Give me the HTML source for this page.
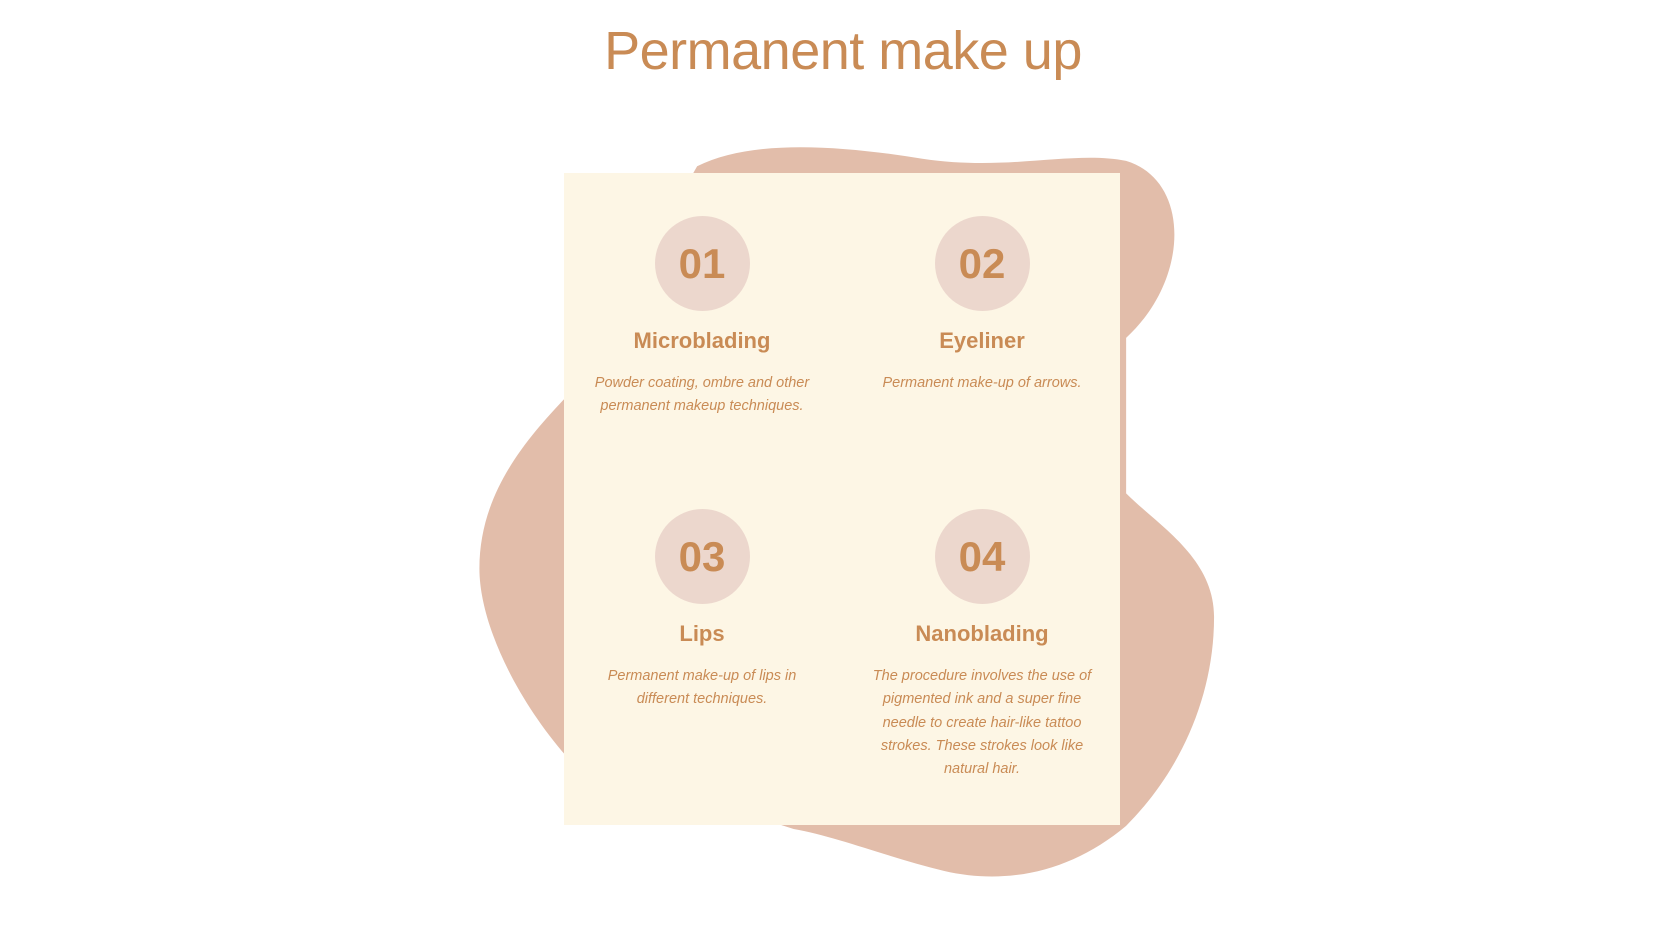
<!DOCTYPE html>
<html><head><meta charset="utf-8"><style>
html,body{margin:0;padding:0;background:#fff;width:1673px;height:941px;overflow:hidden;font-family:"Liberation Sans",sans-serif;color:#c98b55}
h1{position:absolute;left:0;width:1686px;top:20px;margin:0;text-align:center;font-weight:400;font-size:54px;letter-spacing:-0.5px}
svg{position:absolute;left:0;top:0}
.card{position:absolute;left:564px;top:173px;width:556px;height:652px;background:#fdf6e5}
.item{position:absolute;width:240px;text-align:center}
.c{width:95px;height:95px;border-radius:50%;background:#ecd7cd;margin:0 auto;font-weight:700;font-size:42px;line-height:95px}
.h{font-weight:700;font-size:22px;margin-top:17px;height:26px}
.d{font-style:italic;font-size:14.5px;line-height:23.3px;margin-top:18px}
</style></head><body>
<h1>Permanent make up</h1>
<svg width="1673" height="941"><g transform="scale(1.0725)"><path fill="#e2bdaa" d="M650,155 C700,130 780,135 860,148 C940,160 1000,140 1050,150 C1110,168 1110,260 1050,315 L1050,460 C1080,490 1132,520 1132,575 C1132,650 1100,720 1050,770 C1000,812 940,826 880,812 C830,800 780,780 740,773 L528,705 C480,650 447,580 447,530 C447,460 490,410 528,370 Z"/></g></svg>
<div class="card">
<div class="item" style="left:18px;top:43px"><div class="c">01</div><div class="h">Microblading</div><div class="d">Powder coating, ombre and other<br>permanent makeup techniques.</div></div>
<div class="item" style="left:298px;top:43px"><div class="c">02</div><div class="h">Eyeliner</div><div class="d">Permanent make-up of arrows.</div></div>
<div class="item" style="left:18px;top:336px"><div class="c">03</div><div class="h">Lips</div><div class="d">Permanent make-up of lips in<br>different techniques.</div></div>
<div class="item" style="left:298px;top:336px"><div class="c">04</div><div class="h">Nanoblading</div><div class="d">The procedure involves the use of<br>pigmented ink and a super fine<br>needle to create hair-like tattoo<br>strokes. These strokes look like<br>natural hair.</div></div>
</div>
</body></html>
